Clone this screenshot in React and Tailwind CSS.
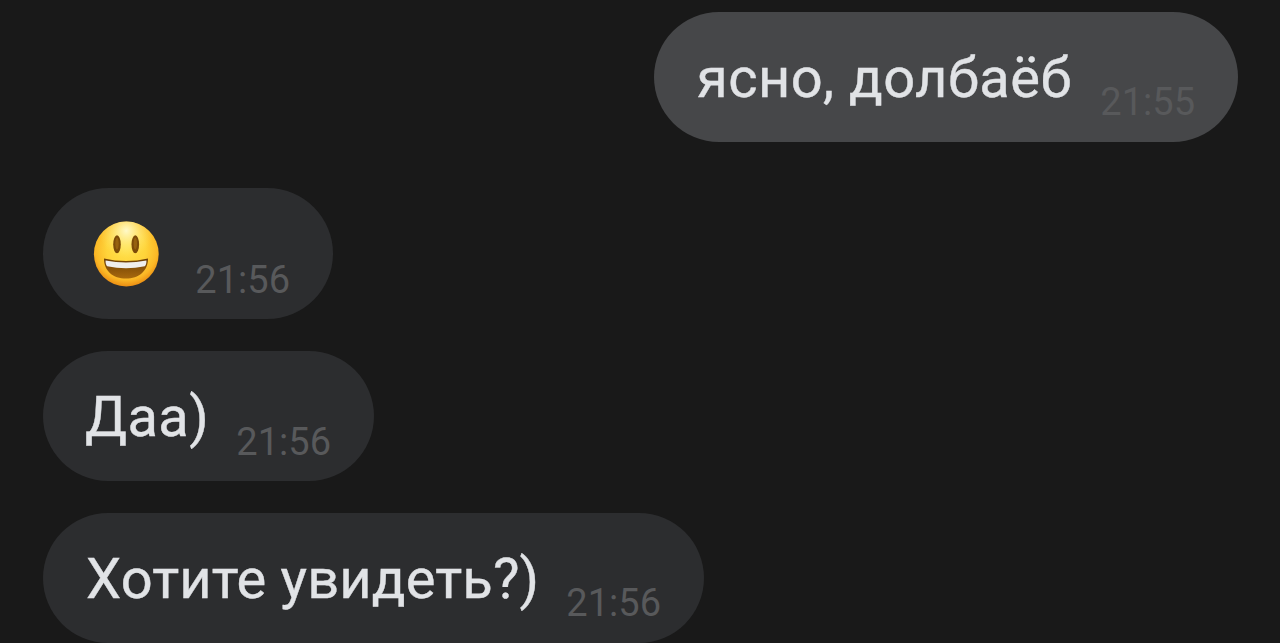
function GrinEmoji() {
  return (
    <svg viewBox="0 0 66 66" className="h-[66px] w-[66px]" aria-label="😃">
      <defs>
        <radialGradient id="face" cx="0.5" cy="0.42" r="0.6">
          <stop offset="0" stopColor="#ffe04a" />
          <stop offset="0.5" stopColor="#ffd43a" />
          <stop offset="0.8" stopColor="#fbb826" />
          <stop offset="1" stopColor="#e8850f" />
        </radialGradient>
        <radialGradient id="shine" cx="0.5" cy="0.14" r="0.42">
          <stop offset="0" stopColor="#fffbd0" stopOpacity="0.95" />
          <stop offset="1" stopColor="#ffec70" stopOpacity="0" />
        </radialGradient>
        <linearGradient id="mouth" x1="0" y1="0" x2="0" y2="1">
          <stop offset="0" stopColor="#6a3d05" />
          <stop offset="1" stopColor="#a8690d" />
        </linearGradient>
      </defs>
      <circle cx="33.3" cy="33" r="32.4" fill="url(#face)" />
      <circle cx="33.3" cy="33" r="32.4" fill="url(#shine)" />
      <ellipse cx="24" cy="23.3" rx="3.8" ry="9" fill="#7c4b08" />
      <ellipse cx="42.3" cy="23.3" rx="3.8" ry="9" fill="#7c4b08" />
      <ellipse cx="24" cy="22.5" rx="1.7" ry="6" fill="#96610f" />
      <ellipse cx="42.3" cy="22.5" rx="1.7" ry="6" fill="#96610f" />
      <path
        d="M11 37.5 Q33 42.5 55 37.5 C55 50 46 57.5 33 57.5 S11 50 11 37.5Z"
        fill="url(#mouth)"
      />
      <path
        d="M12.6 39.5 Q33 43.6 53.4 39.5 C53.6 42 53 44 51.8 45.2 Q33 49.5 14.2 45.2 C13 44 12.4 42 12.6 39.5Z"
        fill="#efeeed"
      />
    </svg>
  );
}

const messages = [
  {
    text: "ясно, долбаёб",
    time: "21:55",
    bubble: "ml-[654px] w-[584px] h-[130px] mb-[46px] bg-[#464749]",
    textClass: "w-[374px] tracking-[0.45px]",
    timeClass: "mt-[67px] text-[#58595b]",
  },
  {
    emoji: true,
    time: "21:56",
    bubble: "ml-[43px] w-[290px] h-[131px] mb-8 bg-[#2c2d2f]",
    timeClass: "mt-[69px] text-[#58595b]",
  },
  {
    text: "Даа)",
    time: "21:56",
    bubble: "ml-[43px] w-[331px] h-[130px] mb-8 bg-[#2c2d2f]",
    textClass: "w-[121px] -ml-px tracking-[0.4px]",
    timeClass: "mt-[68px] text-[#58595b]",
  },
  {
    text: "Хотите увидеть?)",
    time: "21:56",
    bubble: "ml-[43px] w-[661px] h-[130px] bg-[#2c2d2f]",
    textClass: "w-[452px] tracking-[0.15px]",
    timeClass: "mt-[67px] text-[#58595b]",
  },
];

export default function App() {
  return (
    <main className="flex h-[643px] w-[1280px] flex-col overflow-hidden bg-[#191919] pt-3 font-[Roboto,sans-serif]">
      {messages.map((m, i) => (
        <div
          key={i}
          className={`flex shrink-0 items-start justify-between rounded-full px-[43px] ${m.bubble}`}
        >
          {m.emoji ? (
            <div className="ml-[7px] mt-[33px]">
              <GrinEmoji />
            </div>
          ) : (
            <p
              className={`mt-[30px] whitespace-nowrap text-[56px] leading-[72px] text-[#e1e3e6] [-webkit-text-stroke:0.4px_#e1e3e6] ${m.textClass}`}
            >
              {m.text}
            </p>
          )}
          <time className={`text-[38px] leading-[46px] ${m.timeClass}`}>
            {m.time}
          </time>
        </div>
      ))}
    </main>
  );
}
